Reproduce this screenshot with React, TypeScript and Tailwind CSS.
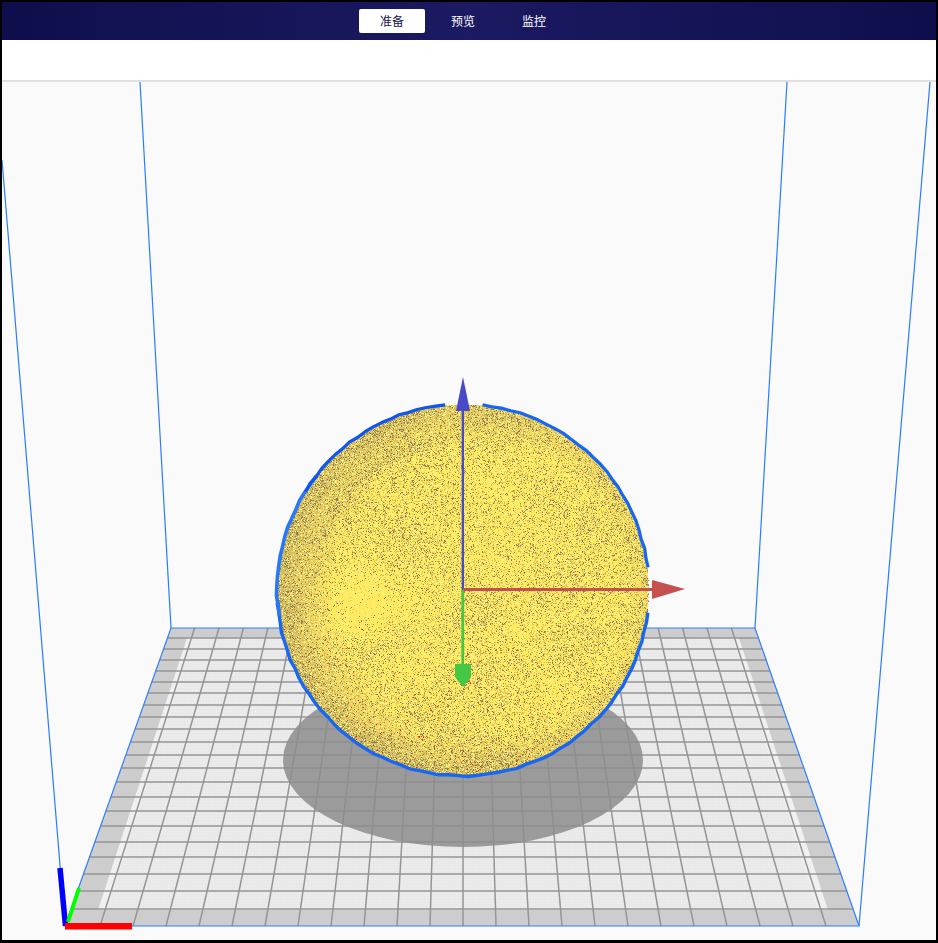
import { useMemo } from "react";

const CX = 463;
const CY = 590;
const R = 185.5;

// rows of the bed grid, read off the picture
const ROWS = [638, 649, 660, 671, 682, 693, 705, 717, 729, 742, 755, 768, 782, 797, 811, 826, 842, 857, 874, 891, 909];
const COLS = Array.from({ length: 23 }, (_, i) => i - 11);

const seeded = (seed: number) => () => {
  seed = (seed + 0x6d2b79f5) | 0;
  let t = Math.imul(seed ^ (seed >>> 15), 1 | seed);
  t = (t + Math.imul(t ^ (t >>> 7), 61 | t)) ^ t;
  return ((t ^ (t >>> 14)) >>> 0) / 4294967296;
};

const clamp = (v: number) => Math.max(0, Math.min(1, v));

function speckle() {
  const rand = seeded(42);
  const dark: string[] = [];
  const tan: string[] = [];
  const light: string[] = [];
  const red: string[] = [];
  const top = Math.ceil(CY - R);
  const left = Math.ceil(CX - R);
  for (let y = top; y <= CY + R; y++) {
    for (let x = left; x <= CX + R; x++) {
      const dx = x - CX;
      const dy = y - CY;
      const t = Math.sqrt(dx * dx + dy * dy) / R;
      if (t > 1) continue;
      const patches = 0.5 + 0.5 * Math.sin(x * 0.045 + Math.sin(y * 0.03) * 2) * Math.cos(y * 0.05 - x * 0.012);
      let d = 0.2 + 0.17 * patches;
      // rim gets busier, mostly on the upper left
      const leftness = clamp(-dx / R + 0.55);
      d += clamp((t - 0.84) / 0.14) * (0.14 + 0.26 * leftness);
      // darker band inside the upper left rim
      const band = Math.abs(t - 0.82);
      if (dx < 0 && dy < 20 && band < 0.06) d += 0.3 * clamp(-dy / 120 + 0.4) * (1 - band / 0.06);
      // bright blotch on the left
      const blob = Math.hypot(x - 362, y - 602) / 48;
      if (blob < 1) d *= 0.12 + 0.88 * blob * blob;
      // noisier towards the bottom
      d += clamp((y - 690) / 90) * 0.12;

      const r = rand();
      const p = `M${x} ${y}h1v1h-1z`;
      const redChance = y > 570 ? 0.002 + clamp((y - 640) / 130) * 0.01 : 0;
      if (r < redChance) red.push(p);
      else if (r < d * 0.28) dark.push(p);
      else if (r < d) tan.push(p);
      else if (r < d + 0.16) light.push(p);
    }
  }
  return { dark: dark.join(""), tan: tan.join(""), light: light.join(""), red: red.join("") };
}

// faceted outline, like the selected mesh's silhouette
function outline(fromDeg: number, toDeg: number, seed: number) {
  const rand = seeded(seed);
  const pts: string[] = [];
  const steps = Math.round((toDeg - fromDeg) / 3);
  for (let i = 0; i <= steps; i++) {
    const rad = ((fromDeg + ((toDeg - fromDeg) * i) / steps) * Math.PI) / 180;
    const rr = R - 0.2 + rand() * 1.3;
    pts.push(`${(CX + Math.cos(rad) * rr).toFixed(1)},${(CY + Math.sin(rad) * rr).toFixed(1)}`);
  }
  return pts.join(" ");
}

function Bed() {
  return (
    <g>
      <polygon points="171,628 755,628 859,926 65,926" fill="#cdcdcd" />
      <polygon points="187,638 739,638 828,910 98,910" fill="#f0f0f0" />
      <polygon points="193,638 733,638 818,910 107,910" fill="url(#dots)" />
      <g stroke="#959595" strokeWidth="1.5">
        {ROWS.map((y) => {
          const k = (y - 628) / 298;
          return <line key={y} x1={171 - 106 * k} y1={y} x2={755 + 104 * k} y2={y} />;
        })}
        {COLS.map((i) => (
          <line key={i} x1={463 + i * 24.4} y1={628} x2={463 + i * 33} y2={926} />
        ))}
      </g>
      <ellipse cx="463" cy="760" rx="180" ry="87" fill="#8d8d8d" fillOpacity="0.85" />
      <polygon points="171,628 755,628 859,926 65,926" fill="none" stroke="#2f7ffb" strokeWidth="1.2" />
    </g>
  );
}

function Sphere() {
  const dots = useMemo(speckle, []);
  return (
    <g>
      <circle cx={CX} cy={CY} r={R} fill="url(#ball)" />
      <g shapeRendering="crispEdges">
        <path d={dots.light} fill="#fff283" />
        <path d={dots.tan} fill="#d2bb5e" />
        <path d={dots.dark} fill="#8a7f58" />
        <path d={dots.red} fill="#f01c1c" />
      </g>
      <g fill="none" strokeLinejoin="round">
        <polyline points={outline(-84, -7, 3)} stroke="#1767f2" strokeWidth="3.2" />
        <polyline points={outline(7, 176, 5)} stroke="#1767f2" strokeWidth="3.4" />
        <polyline points={outline(172, 218, 7)} stroke="#2578f7" strokeWidth="3.6" />
        <polyline points={outline(212, 264.5, 9)} stroke="#0f55ee" strokeWidth="3.2" />
      </g>
    </g>
  );
}

function Gizmo() {
  return (
    <g>
      <rect x="461.7" y="405" width="2.3" height="185" fill="#4a4ac6" />
      <polygon points="463,377 470,411 456,411" fill="#4a4ac6" />
      <rect x="463" y="588" width="190" height="3" fill="#c64f4f" />
      <polygon points="652,580 685,589 652,599" fill="#c64f4f" />
      <rect x="461.4" y="590" width="2.7" height="76" fill="#44c844" />
      <polygon points="455,664 471,664 471,677 463,687 455,677" fill="#44c844" />
    </g>
  );
}

function Axes() {
  return (
    <g>
      <line x1="60" y1="868" x2="65.5" y2="926" stroke="#0000ff" strokeWidth="5.5" />
      <line x1="79" y1="888" x2="68" y2="922" stroke="#00ff00" strokeWidth="4" />
      <rect x="65" y="923" width="67" height="6.5" fill="#ff0000" />
    </g>
  );
}

export default function App() {
  return (
    <div className="flex h-screen flex-col border-x-2 border-t-2 border-b-[3px] border-black bg-white font-['Noto_Sans_CJK_SC',sans-serif]">
      <header className="flex h-[38px] shrink-0 items-center justify-center gap-[5px] bg-linear-to-r from-[#0f0e4c] via-[#1b1a62] to-[#0f0e4c] pr-3">
        <button className="h-6 w-[66px] rounded-[2px] bg-white text-xs text-[#14134f]">准备</button>
        <button className="h-6 w-[66px] text-xs text-white">预览</button>
        <button className="h-6 w-[66px] text-xs text-white">监控</button>
      </header>
      <div className="h-[42px] shrink-0 border-b-2 border-[#e0e0e0] bg-white" />
      <div className="min-h-0 flex-1 bg-[#fafafa]">
        <svg viewBox="2 82 934 858" className="block h-full w-full">
          <defs>
            <pattern id="dots" width="3" height="3" patternUnits="userSpaceOnUse">
              <rect width="3" height="3" fill="#e9e9e9" />
              <rect width="1" height="1" fill="#f0f0f0" />
            </pattern>
            <radialGradient id="ball" gradientUnits="userSpaceOnUse" cx="482" cy="590" r="206">
              <stop offset="0" stopColor="#ffea5f" />
              <stop offset="0.72" stopColor="#ffe95c" />
              <stop offset="1" stopColor="#dcbc62" />
            </radialGradient>
          </defs>
          <g stroke="#2a7bff" strokeWidth="1.2" fill="none">
            <line x1="2" y1="160" x2="65" y2="926" />
            <line x1="140" y1="82" x2="171" y2="628" />
            <line x1="787" y1="82" x2="755" y2="628" />
            <line x1="930" y1="82" x2="859" y2="926" />
          </g>
          <Bed />
          <Sphere />
          <Gizmo />
          <Axes />
        </svg>
      </div>
    </div>
  );
}
